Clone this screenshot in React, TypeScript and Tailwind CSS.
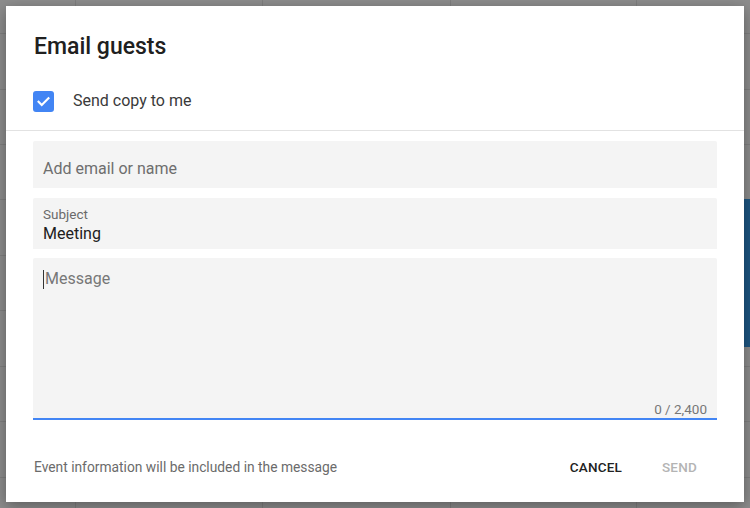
import { useState } from "react";

const rowLines = [33, 89, 144, 199, 255, 310, 366, 421, 477];
const colLines = [75, 262, 450, 636];

function CalendarBackdrop() {
  return (
    <div className="absolute inset-0 bg-[#8d8d8d]">
      {rowLines.map((y) => (
        <div key={`r${y}`} className="absolute left-0 right-0 h-px bg-[#7f7f7f]" style={{ top: y }} />
      ))}
      {colLines.map((x) => (
        <div key={`c${x}`} className="absolute top-0 bottom-0 w-px bg-[#7f7f7f]" style={{ left: x }} />
      ))}
      {/* event block peeking from the right */}
      <div className="absolute left-[744px] top-[199px] h-[148px] right-0 bg-[#1d5682]" />
    </div>
  );
}

export default function App() {
  const [copyMe, setCopyMe] = useState(true);

  return (
    <div
      className="relative w-[750px] h-[508px] overflow-hidden"
      style={{ fontFamily: "Roboto, 'Liberation Sans', sans-serif" }}
    >
      <CalendarBackdrop />

      {/* Dialog */}
      <div className="absolute left-[6px] top-[6px] w-[738px] h-[496px] bg-white shadow-[0_4px_14px_rgba(0,0,0,0.35)] flex flex-col">
        {/* Header */}
        <div className="px-[27px] pt-[27px] pb-[9px] border-b border-[#e2e2e2]">
          <h1 className="text-[23px] leading-[28px] font-medium text-[#202020] pl-px">Email guests</h1>
          <label className="mt-[20px] h-[40px] flex items-center gap-[19px] cursor-pointer">
            <button
              type="button"
              onClick={() => setCopyMe(!copyMe)}
              className={`w-[21px] h-[21px] rounded-[3px] flex items-center justify-center ${copyMe ? "bg-[#4285f4]" : "border-2 border-[#777]"}`}
            >
              {copyMe && (
                <svg viewBox="0 0 24 24" className="w-[17px] h-[17px]" fill="none" stroke="white" strokeWidth="3" strokeLinecap="square">
                  <path d="M5 12.5l4.5 4.5L19 7.5" />
                </svg>
              )}
            </button>
            <span className="text-[16px] text-[#3a3a3a]">Send copy to me</span>
          </label>
        </div>

        {/* Fields */}
        <div className="px-[27px] pt-[10px] flex flex-col">
          <div className="h-[47px] bg-[#f4f4f4] rounded-t-[2px] px-[10px] pt-[18px]">
            <div className="text-[16px] leading-[20px] text-[#6e6e6e]">Add email or name</div>
          </div>

          <div className="mt-[10px] h-[51px] bg-[#f4f4f4] rounded-t-[2px] px-[10px] pt-[8px] flex flex-col">
            <span className="text-[13.5px] leading-[16px] text-[#6a6a6a]">Subject</span>
            <span className="mt-[2px] text-[16px] leading-[20px] text-[#202020]">Meeting</span>
          </div>

          <div className="mt-[9px] h-[162px] bg-[#f4f4f4] rounded-t-[2px] border-b-2 border-[#4285f4] px-[10px] pt-[10px] pb-[1px] flex flex-col">
            <div className="flex items-center h-[22px]">
              <span className="w-px h-[19px] bg-[#333]" />
              <span className="ml-px text-[16px] text-[#777]">Message</span>
            </div>
            <div className="mt-auto text-right text-[13.5px] leading-[16px] text-[#777]">0 / 2,400</div>
          </div>
        </div>

        {/* Footer */}
        <div className="flex-1 flex items-center pl-[28px] pr-[27px] pt-[12px]">
          <span className="text-[13.8px] text-[#6b6b6b]">Event information will be included in the message</span>
          <div className="ml-auto flex">
            <button type="button" className="px-[20px] h-[36px] text-[13.5px] font-medium text-[#222] tracking-[0.2px]">
              CANCEL
            </button>
            <button type="button" disabled className="px-[20px] h-[36px] text-[13.5px] font-medium text-[#b4b4b4] tracking-[0.2px]">
              SEND
            </button>
          </div>
        </div>
      </div>
    </div>
  );
}
